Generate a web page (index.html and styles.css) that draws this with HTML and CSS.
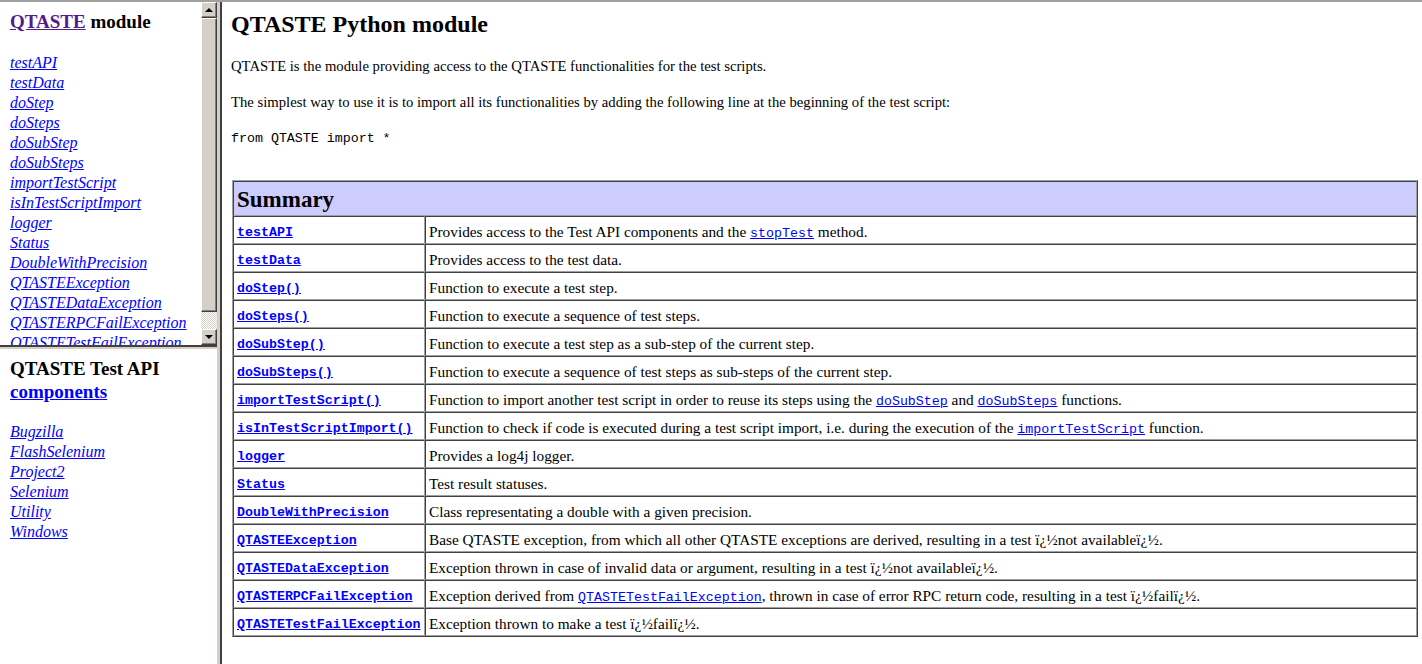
FILE: index.html
```html
<!DOCTYPE html>
<html>
<head>
<meta charset="utf-8">
<title>QTASTE Python module</title>
<link rel="stylesheet" href="styles.css">
</head>
<body>
<div class="frameset">
  <div class="left">
    <div class="frame-top">
      <div class="nav">
        <h3 class="nav-title"><a class="visited" href="#">QTASTE</a> module</h3>
        <ul class="nav-list">
          <li><a href="#">testAPI</a></li>
          <li><a href="#">testData</a></li>
          <li><a href="#">doStep</a></li>
          <li><a href="#">doSteps</a></li>
          <li><a href="#">doSubStep</a></li>
          <li><a href="#">doSubSteps</a></li>
          <li><a href="#">importTestScript</a></li>
          <li><a href="#">isInTestScriptImport</a></li>
          <li><a href="#">logger</a></li>
          <li><a href="#">Status</a></li>
          <li><a href="#">DoubleWithPrecision</a></li>
          <li><a href="#">QTASTEException</a></li>
          <li><a href="#">QTASTEDataException</a></li>
          <li><a href="#">QTASTERPCFailException</a></li>
          <li><a href="#">QTASTETestFailException</a></li>
        </ul>
      </div>
      <div class="scrollbar">
        <div class="sb-btn"><span class="arrow-up"></span></div>
        <div class="sb-thumb"></div>
        <div class="sb-track"></div>
        <div class="sb-btn"><span class="arrow-down"></span></div>
      </div>
    </div>
    <div class="hsep"></div>
    <div class="frame-bottom">
      <h3 class="nav-title">QTASTE Test API <a href="#">components</a></h3>
      <ul class="nav-list nav-list-bottom">
        <li><a href="#">Bugzilla</a></li>
        <li><a href="#">FlashSelenium</a></li>
        <li><a href="#">Project2</a></li>
        <li><a href="#">Selenium</a></li>
        <li><a href="#">Utility</a></li>
        <li><a href="#">Windows</a></li>
      </ul>
    </div>
  </div>
  <div class="vsep"></div>
  <div class="main">
    <h1 class="title">QTASTE Python module</h1>
    <p class="para p1">QTASTE is the module providing access to the QTASTE functionalities for the test scripts.</p>
    <p class="para p2">The simplest way to use it is to import all its functionalities by adding the following line at the beginning of the test script:</p>
    <pre class="code">from QTASTE import *</pre>
    <table class="summary">
      <tr><th colspan="2" class="summary-head">Summary</th></tr>
      <tr><td class="name"><a href="#">testAPI</a></td><td class="desc">Provides access to the Test API components and the <a class="code-link" href="#">stopTest</a> method.</td></tr>
      <tr><td class="name"><a href="#">testData</a></td><td class="desc">Provides access to the test data.</td></tr>
      <tr><td class="name"><a href="#">doStep()</a></td><td class="desc">Function to execute a test step.</td></tr>
      <tr><td class="name"><a href="#">doSteps()</a></td><td class="desc">Function to execute a sequence of test steps.</td></tr>
      <tr><td class="name"><a href="#">doSubStep()</a></td><td class="desc">Function to execute a test step as a sub-step of the current step.</td></tr>
      <tr><td class="name"><a href="#">doSubSteps()</a></td><td class="desc">Function to execute a sequence of test steps as sub-steps of the current step.</td></tr>
      <tr><td class="name"><a href="#">importTestScript()</a></td><td class="desc">Function to import another test script in order to reuse its steps using the <a class="code-link" href="#">doSubStep</a> and <a class="code-link" href="#">doSubSteps</a> functions.</td></tr>
      <tr><td class="name"><a href="#">isInTestScriptImport()</a></td><td class="desc">Function to check if code is executed during a test script import, i.e. during the execution of the <a class="code-link" href="#">importTestScript</a> function.</td></tr>
      <tr><td class="name"><a href="#">logger</a></td><td class="desc">Provides a log4j logger.</td></tr>
      <tr><td class="name"><a href="#">Status</a></td><td class="desc">Test result statuses.</td></tr>
      <tr><td class="name"><a href="#">DoubleWithPrecision</a></td><td class="desc">Class representating a double with a given precision.</td></tr>
      <tr><td class="name"><a href="#">QTASTEException</a></td><td class="desc">Base QTASTE exception, from which all other QTASTE exceptions are derived, resulting in a test ï¿½not availableï¿½.</td></tr>
      <tr><td class="name"><a href="#">QTASTEDataException</a></td><td class="desc">Exception thrown in case of invalid data or argument, resulting in a test ï¿½not availableï¿½.</td></tr>
      <tr><td class="name"><a href="#">QTASTERPCFailException</a></td><td class="desc">Exception derived from <a class="code-link" href="#">QTASTETestFailException</a>, thrown in case of error RPC return code, resulting in a test ï¿½failï¿½.</td></tr>
      <tr><td class="name"><a href="#">QTASTETestFailException</a></td><td class="desc">Exception thrown to make a test ï¿½failï¿½.</td></tr>
    </table>
  </div>
</div>
</body>
</html>
```
FILE: styles.css
```css
html, body {
  margin: 0;
  padding: 0;
  background: #ffffff;
  overflow: hidden;
}

body {
  font-family: "Liberation Serif", "Times New Roman", serif;
  color: #000000;
}

a {
  color: #0000ff;
}

a.visited {
  color: #551a8b;
}

.frameset {
  display: flex;
  height: 664px;
  border-top: 2px solid #a0a0a0;
  box-sizing: border-box;
}

.left {
  width: 217px;
  display: flex;
  flex-direction: column;
  flex: none;
}

.frame-top {
  height: 343px;
  display: flex;
  flex: none;
  overflow: hidden;
}

.nav {
  flex: 1;
  padding-left: 10px;
  overflow: hidden;
  white-space: nowrap;
}

.nav-title {
  font-size: 19px;
  font-weight: bold;
  line-height: 22px;
  margin: 9px 0 0;
}

.nav-list {
  list-style: none;
  margin: 20px 0 0;
  padding: 0;
  font-size: 16px;
  line-height: 20px;
  font-style: italic;
}

.frame-bottom .nav-title {
  width: 170px;
  margin-top: 8px;
  line-height: 23px;
}

.nav-list-bottom {
  margin-top: 19px;
}

.scrollbar {
  width: 16px;
  flex: none;
  display: flex;
  flex-direction: column;
  background: #d4d0c8;
}

.sb-btn {
  height: 16px;
  box-sizing: border-box;
  background: #d4d0c8;
  border-top: 1px solid #ffffff;
  border-left: 1px solid #ffffff;
  border-right: 1px solid #404040;
  border-bottom: 1px solid #404040;
  box-shadow: inset -1px -1px 0 #808080;
  display: flex;
  align-items: center;
  justify-content: center;
}

.arrow-up {
  width: 0;
  height: 0;
  border-left: 4px solid transparent;
  border-right: 4px solid transparent;
  border-bottom: 4px solid #000000;
}

.arrow-down {
  width: 0;
  height: 0;
  border-left: 4px solid transparent;
  border-right: 4px solid transparent;
  border-top: 4px solid #000000;
}

.sb-thumb {
  height: 294px;
  box-sizing: border-box;
  background: #d4d0c8;
  border-top: 1px solid #ffffff;
  border-left: 1px solid #ffffff;
  border-right: 1px solid #404040;
  border-bottom: 1px solid #404040;
  box-shadow: inset -1px -1px 0 #808080;
}

.sb-track {
  flex: 1;
  background-color: #ffffff;
  background-image: linear-gradient(45deg, #d4d0c8 25%, transparent 25%, transparent 75%, #d4d0c8 75%), linear-gradient(45deg, #d4d0c8 25%, transparent 25%, transparent 75%, #d4d0c8 75%);
  background-size: 2px 2px;
  background-position: 0 0, 1px 1px;
}

.hsep {
  height: 4px;
  flex: none;
  background: #d4d0c8;
  border-top: 2px solid #404040;
  box-sizing: border-box;
}

.frame-bottom {
  flex: 1;
  padding-left: 10px;
}

.vsep {
  width: 5px;
  flex: none;
  background: #d4d0c8;
  border-right: 2px solid #404040;
  box-sizing: border-box;
}

.main {
  flex: 1;
  padding-left: 9px;
  overflow: hidden;
}

.title {
  font-size: 24px;
  font-weight: bold;
  line-height: 28px;
  margin: 8px 0 0;
}

.para {
  font-size: 14.7px;
  line-height: 16px;
  margin: 0;
}

.p1 {
  margin-top: 20px;
}

.p2 {
  margin-top: 20px;
}

.code {
  font-family: "Liberation Mono", "Courier New", monospace;
  font-size: 13.3px;
  line-height: 15px;
  margin: 21px 0 0;
}

.summary {
  margin-top: 34px;
  margin-left: 1px;
  width: 1186px;
  border-collapse: separate;
  border-spacing: 0;
  border-top: 1px solid #a0a0a0;
  border-left: 1px solid #a0a0a0;
  border-right: 1px solid #404040;
  border-bottom: 1px solid #404040;
}

.summary th,
.summary td {
  border-top: 1px solid #404040;
  border-left: 1px solid #404040;
  border-right: 1px solid #a0a0a0;
  border-bottom: 1px solid #a0a0a0;
  text-align: left;
}

.summary-head {
  background: #ccccff;
  font-size: 23px;
  font-weight: bold;
  line-height: 28px;
  padding: 4px 3px 1px;
}

.summary td {
  font-size: 15.3px;
  line-height: 15px;
  height: 15px;
  padding: 7px 3px 4px;
  vertical-align: top;
}

.summary td.name {
  width: 184px;
  padding-top: 8px;
  padding-bottom: 3px;
  font-family: "Liberation Mono", "Courier New", monospace;
  font-size: 13.3px;
  font-weight: bold;
  white-space: nowrap;
}

.code-link {
  font-family: "Liberation Mono", "Courier New", monospace;
  font-size: 13.3px;
  line-height: 9px;
}
```
